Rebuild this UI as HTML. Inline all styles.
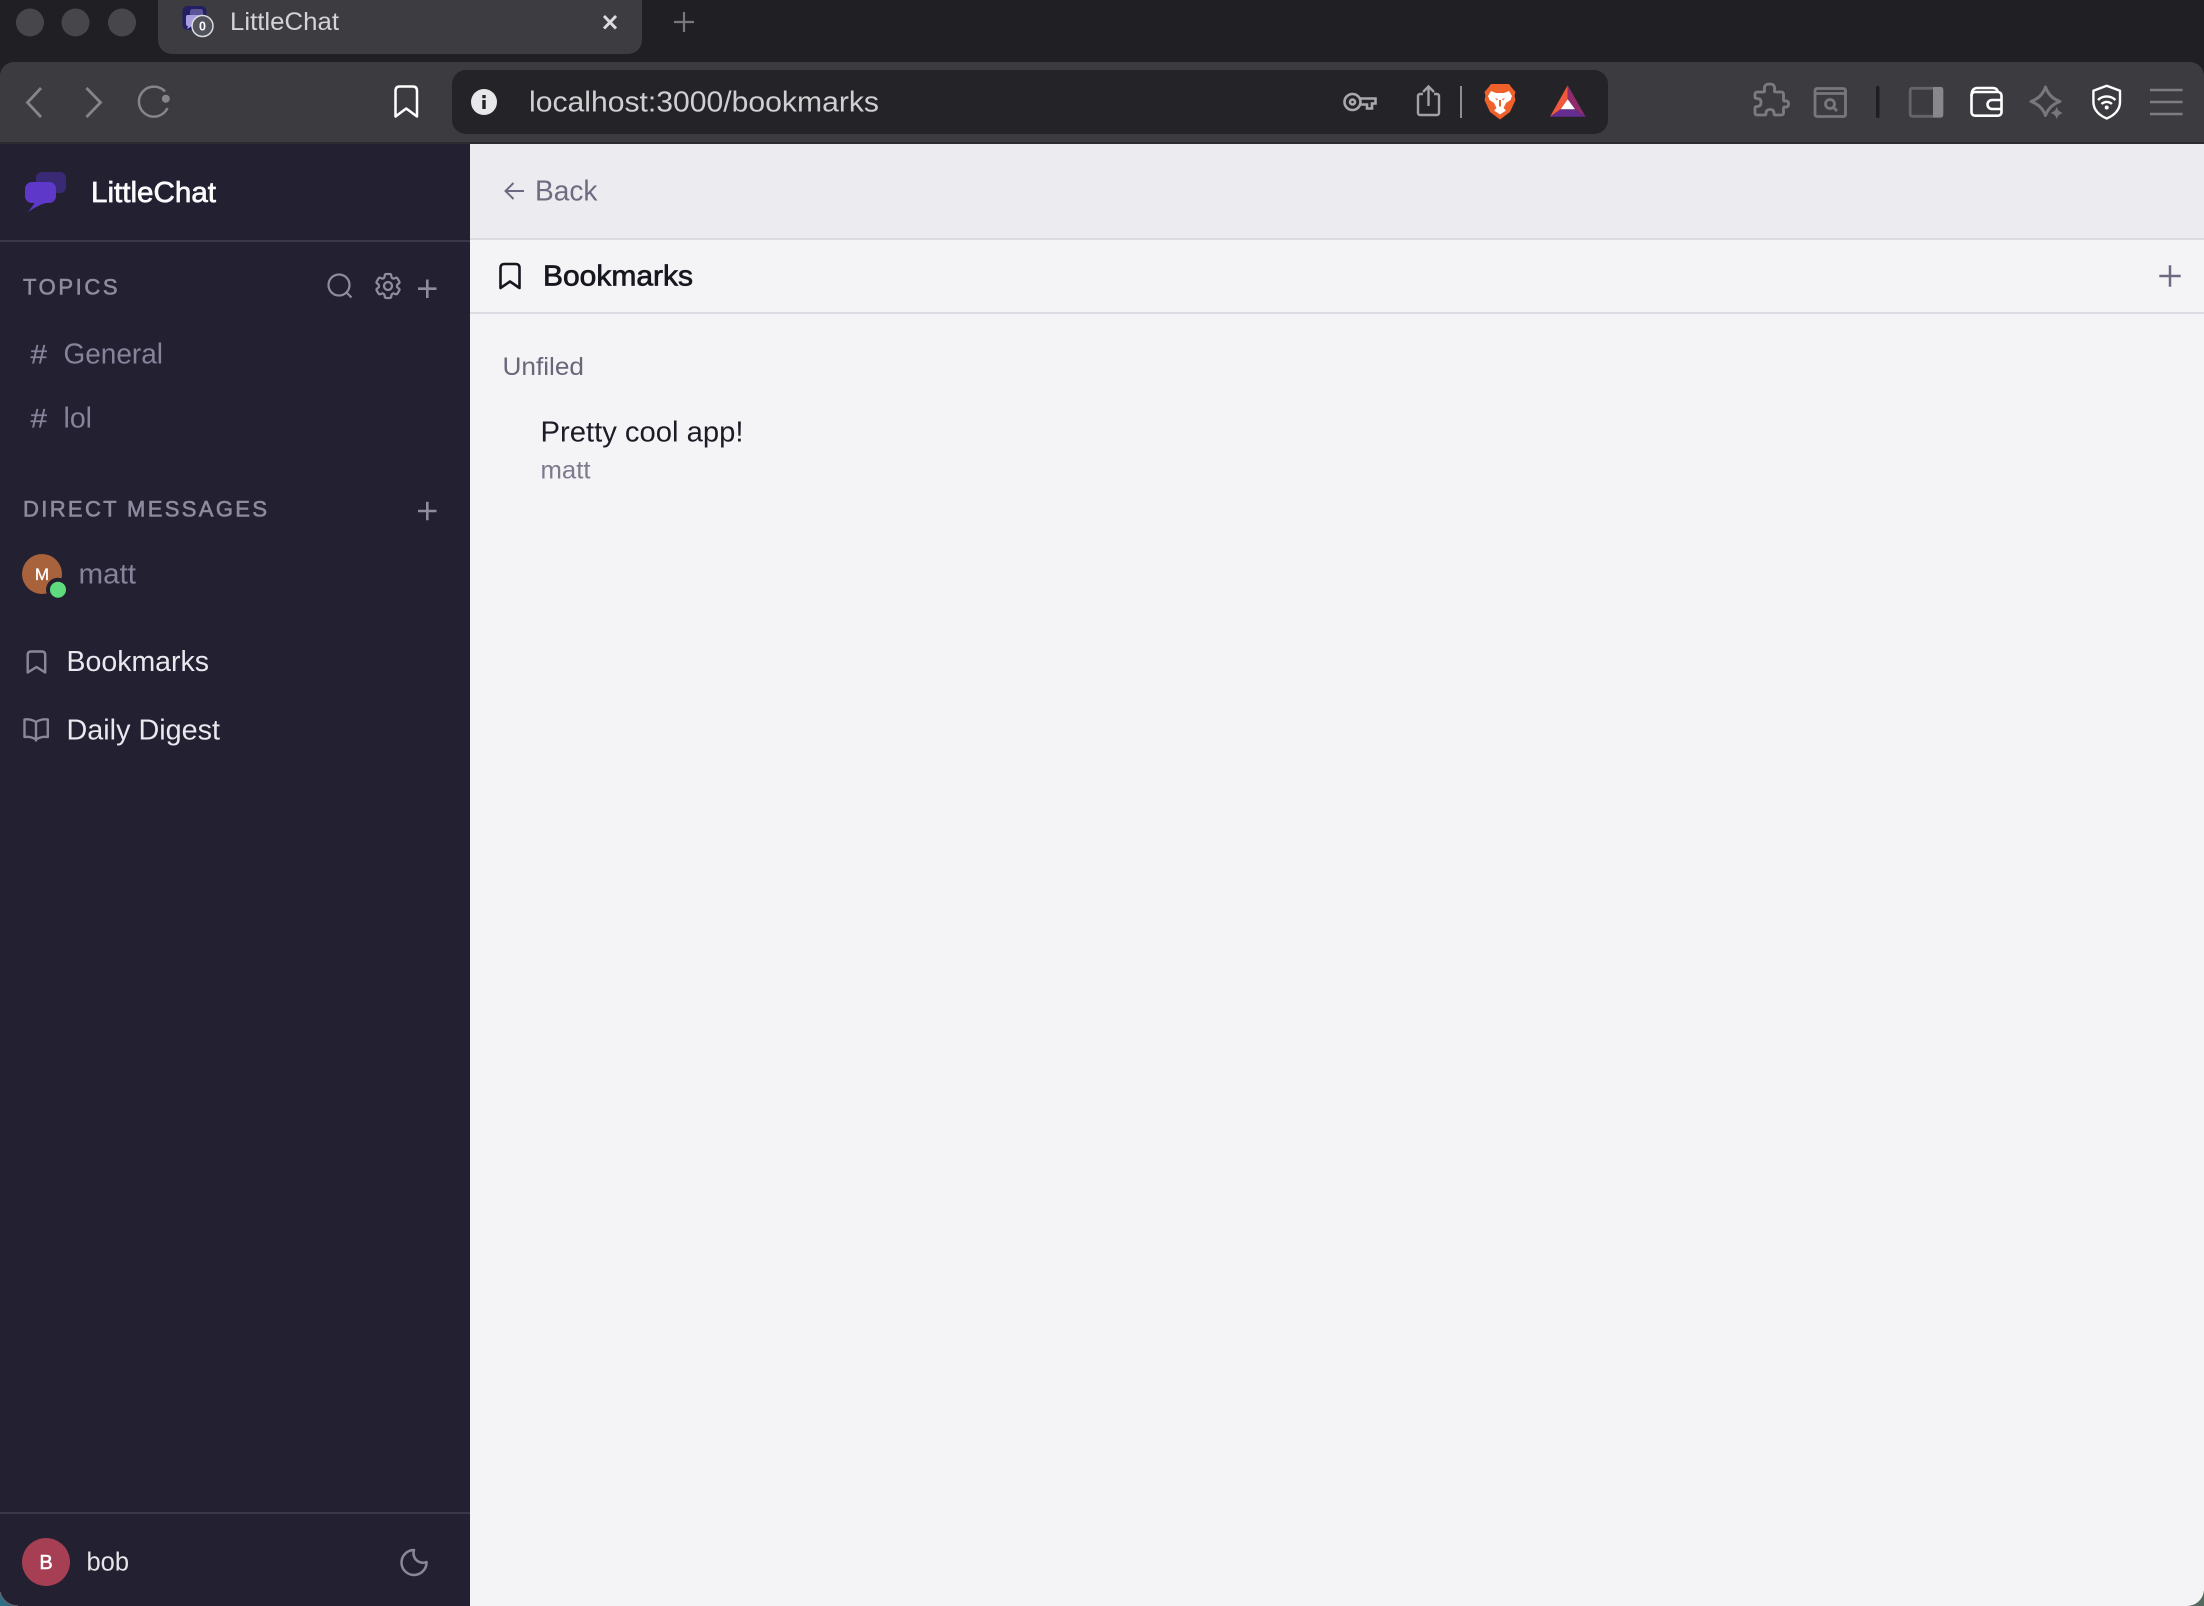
<!DOCTYPE html>
<html lang="en">
<head>
<meta charset="utf-8">
<title>LittleChat</title>
<style>
html,body{margin:0;padding:0;width:2204px;height:1606px;overflow:hidden;background:#202024}
svg{display:block;position:absolute;left:0;top:0}
text{font-family:"Liberation Sans",sans-serif}
</style>
</head>
<body>
<svg width="2204" height="1606" viewBox="0 0 2204 1606" xmlns="http://www.w3.org/2000/svg">
  <!-- window chrome -->
  <rect width="2204" height="1606" fill="#202024"/>
  <circle cx="30" cy="22.5" r="14" fill="#47474b"/>
  <circle cx="75.5" cy="22.5" r="14" fill="#47474b"/>
  <circle cx="122" cy="22.5" r="14" fill="#47474b"/>
  <path d="M158 0H642V40a14 14 0 0 1-14 14H172a14 14 0 0 1-14-14Z" fill="#3c3c41"/>
  <!-- favicon -->
  <rect x="182.5" y="6" width="24" height="24" rx="5" fill="#231f63"/>
  <rect x="190" y="9" width="13" height="10" rx="2.5" fill="#5c5699"/>
  <path d="M187 15h12a2 2 0 0 1 2 2v7a2 2 0 0 1-2 2h-7l-5 3 1-3a2 2 0 0 1-2-2v-7a2 2 0 0 1 1-2Z" fill="#a89fe0"/>
  <circle cx="202.5" cy="26" r="10.5" fill="#50525c" stroke="#dddddf" stroke-width="1.5"/>
  <text x="202.5" y="30.5" font-size="12.5" font-weight="700" fill="#fff" text-anchor="middle">0</text>
  <text x="230" y="30" font-size="25" fill="#d4d4d6" textLength="109" lengthAdjust="spacingAndGlyphs">LittleChat</text>
  <path d="M604 16l12 12.500M616 16l-12 12.500" stroke="#dcdcde" stroke-width="3" fill="none"/>
  <path d="M684 12v20M674 22h20" stroke="#77777c" stroke-width="2.200" fill="none"/>

  <!-- toolbar -->
  <path d="M0 144V76a14 14 0 0 1 14-14H2190a14 14 0 0 1 14 14V144Z" fill="#3c3b40"/>
  <rect y="142" width="2204" height="2" fill="#2c2c30"/>
  <path d="M41 88L27.5 102.500 41 117M86.500 88L100.500 102.500 86.500 117" stroke="#86868a" stroke-width="2.800" fill="none"/>
  <path d="M165 91.500A15 15 0 1 0 167.500 108" stroke="#86868a" stroke-width="2.500" fill="none"/>
  <circle cx="165.800" cy="98.700" r="4" fill="#86868a"/>
  <path d="M395.500 91q0-4.500 4-4.500h13.500q4 0 4 4.500V116.500l-10.800-8-10.700 8Z" stroke="#fff" stroke-width="2.500" fill="none" stroke-linejoin="round"/>
  <rect x="452" y="70" width="1156" height="64" rx="14" fill="#242428"/>
  <circle cx="484" cy="102" r="13" fill="#e8e8ea"/>
  <rect x="482.300" y="100" width="3.400" height="9" fill="#242428"/>
  <rect x="482.300" y="95" width="3.400" height="3.200" fill="#242428"/>
  <text x="529" y="111.500" font-size="29" fill="#d0d0d2" textLength="350" lengthAdjust="spacingAndGlyphs">localhost:3000/bookmarks</text>
  <!-- key -->
  <g stroke="#a9a9ad" stroke-width="2.600" fill="none">
    <circle cx="1352.500" cy="102" r="8"/>
    <circle cx="1352.500" cy="102" r="2.500"/>
    <path d="M1360.500 98.500H1375.500V103.500H1372V108.500H1367V104.500H1360.500"/>
  </g>
  <!-- share -->
  <g stroke="#a2a2a6" stroke-width="2.400" fill="none">
    <path d="M1423 94h-3a2 2 0 0 0-2 2v17a2 2 0 0 0 2 2h17a2 2 0 0 0 2-2V96a2 2 0 0 0-2-2h-3"/>
    <path d="M1428.500 106V87M1423 92l5.500-5.500 5.500 5.500"/>
  </g>
  <rect x="1460" y="86" width="2" height="32" fill="#8e8e92"/>
  <!-- lion shield -->
  <path d="M1491 84H1509L1512 88 1515.500 92 1514.500 96 1515.500 100 1510 112 1500 119.500 1490 112 1484.500 100 1485.500 96 1484.500 92 1488 88Z" fill="#f0602a"/>
  <path d="M1491 91L1496 93H1504L1509 91 1512 96 1510.500 100 1506 103 1503.500 108 1506 110.500 1500 114.500 1494 110.500 1496.500 108 1494 103 1489.500 100 1488 96Z" fill="#fff"/>
  <path d="M1495 98l3 1-1 1.500zM1505 98l-3 1 1 1.500zM1499 100V106.500h2V100Z" fill="#f0602a"/>
  <!-- BAT -->
  <path d="M1567.700 85.300L1550 116.700 1560.700 109.300 1567.700 99.300Z" fill="#f0593c"/>
  <path d="M1567.700 85.300L1585.700 116.700 1575 109.300 1567.700 99.300Z" fill="#8f2a6b"/>
  <path d="M1550 116.700H1585.700L1575 109.300H1560.700Z" fill="#662d91"/>
  <path d="M1567.700 99.300L1560.700 109.300H1575Z" fill="#fff"/>
  <!-- right toolbar icons -->
  <path d="M1757 92h6.500q1.500 0 1-2q-1-6 5-6q6 0 5 6q-.5 2 1 2h6a2 2 0 0 1 2 2v6q0 1.500 2 1q3-.5 3 3q0 3.500-3 3q-2-.5-2 1v5a2 2 0 0 1-2 2h-6q-1.500 0-1.500-1.500q0-4-4-4q-4 0-4 4q0 1.500-1.500 1.500h-7.500a2 2 0 0 1-2-2v-5q0-1.500 2-1.500q4 0 4-4q0-4-4-4q-2 0-2-1.500v-3a2 2 0 0 1 2-2Z" stroke="#7c7c80" stroke-width="2.800" fill="none"/>
  <g stroke="#78787c" fill="none" stroke-width="2.800">
    <rect x="1815" y="88.500" width="30.500" height="28" rx="2"/>
    <path d="M1815 93.500H1845.500"/>
    <circle cx="1830" cy="104" r="4.500"/>
    <path d="M1833.500 107.500l3.500 3.500"/>
  </g>
  <rect x="1876" y="86" width="3.500" height="32" rx="1.500" fill="#1e1e22"/>
  <rect x="1910.200" y="88.300" width="32" height="28" rx="2" stroke="#656569" stroke-width="2.800" fill="none"/>
  <path d="M1933 87H1941a2 2 0 0 1 2 2V115.500a2 2 0 0 1-2 2H1933Z" fill="#88888c"/>
  <g stroke="#fff" stroke-width="2.600" fill="none">
    <path d="M1971.500 96q0-8 6-8H1993q4 0 5 4"/>
    <rect x="1971.500" y="92" width="30" height="23.700" rx="3.500"/>
    <path d="M2002 100H1992a4.500 4.500 0 0 0 0 9H2002"/>
  </g>
  <path d="M2045.500 87Q2049 97.500 2060 101.500Q2049 105.500 2045.500 115.500Q2042 105.500 2031 101.500Q2042 97.500 2045.500 87Z" stroke="#78787c" stroke-width="3" fill="none" stroke-linejoin="round"/>
  <path d="M2056.800 106.500C2057.500 110 2059 111.700 2063 113C2059 114.300 2057.500 116 2056.800 119.500C2056 116 2054.500 114.300 2050.500 113C2054.500 111.700 2056 110 2056.800 106.500Z" fill="#78787c"/>
  <g stroke="#fff" fill="none" stroke-width="2.400">
    <path d="M2106.700 85.800L2120 90.800V102C2120 110 2114 115.500 2106.700 118.500C2099.400 115.500 2093.400 110 2093.400 102V90.800Z" stroke-linejoin="round"/>
    <path d="M2098 100a12.500 12.500 0 0 1 17.400 0M2101.500 104a7.500 7.500 0 0 1 10.400 0"/>
  </g>
  <circle cx="2106.700" cy="107.500" r="2" fill="#fff"/>
  <path d="M2150 90H2182.500M2150 102H2182.500M2150 114H2182.500" stroke="#7e7e82" stroke-width="2.500" fill="none"/>

  <!-- sidebar -->
  <rect x="0" y="144" width="470" height="1462" fill="#232031"/>
  <rect x="36" y="172" width="30" height="21" rx="6" fill="#3a2a75"/>
  <path d="M32 182H49a7 7 0 0 1 7 7V196a7 7 0 0 1-7 7H46C40 204.500 34 208 28 212C30 209 33 206 34.500 203H32a7 7 0 0 1-7-7V189a7 7 0 0 1 7-7Z" fill="#5e38c8"/>
  <text x="91" y="202" font-size="29" fill="#fbfbfd" stroke="#fbfbfd" stroke-width=".7" textLength="125" lengthAdjust="spacingAndGlyphs">LittleChat</text>
  <rect y="240" width="470" height="2" fill="#3a3748"/>

  <text x="23" y="294.300" font-size="22" fill="#8f8b9f" stroke="#8f8b9f" stroke-width=".6" textLength="94.500" lengthAdjust="spacing">TOPICS</text>
  <g stroke="#8f8c9e" fill="none" stroke-width="2.200">
    <circle cx="339" cy="285" r="10.500"/>
    <path d="M346.500 292.500L351.500 297.500"/>
  </g>
  <g transform="translate(372 270) scale(1.333)" stroke="#8f8c9e" fill="none" stroke-width="1.700">
    <path d="M9.594 3.94c.09-.542.56-.94 1.11-.94h2.593c.55 0 1.020.398 1.110.94l.213 1.281c.063.374.313.686.645.870.074.040.147.083.220.127.325.196.720.257 1.075.124l1.217-.456a1.125 1.125 0 0 1 1.370.490l1.296 2.247a1.125 1.125 0 0 1-.260 1.431l-1.003.827c-.293.241-.438.613-.430.992a7.723 7.723 0 0 1 0 .255c-.008.378.137.750.430.991l1.004.827c.424.350.534.955.260 1.430l-1.298 2.247a1.125 1.125 0 0 1-1.369.491l-1.217-.456c-.355-.133-.750-.072-1.076.124a6.470 6.470 0 0 1-.220.128c-.331.183-.581.495-.644.869l-.213 1.281c-.090.543-.560.940-1.110.940h-2.594c-.550 0-1.019-.398-1.110-.940l-.213-1.281c-.062-.374-.312-.686-.644-.870a6.520 6.520 0 0 1-.220-.127c-.325-.196-.720-.257-1.076-.124l-1.217.456a1.125 1.125 0 0 1-1.369-.490l-1.297-2.247a1.125 1.125 0 0 1 .260-1.431l1.004-.827c.292-.240.437-.613.430-.991a6.932 6.932 0 0 1 0-.255c.007-.380-.138-.751-.430-.992l-1.004-.827a1.125 1.125 0 0 1-.260-1.430l1.297-2.247a1.125 1.125 0 0 1 1.370-.491l1.216.456c.356.133.751.072 1.076-.124.072-.044.146-.086.220-.128.332-.183.582-.495.644-.869l.214-1.280Z"/>
    <circle cx="12" cy="12" r="3"/>
  </g>
  <path d="M427.300 279.500V298M418 288.700H436.500" stroke="#8f8c9e" stroke-width="2.600" fill="none"/>

  <text x="30.500" y="363.300" font-size="27" fill="#86839a" stroke="#86839a" stroke-width=".3" textLength="16.500" lengthAdjust="spacingAndGlyphs">#</text>
  <text x="63.500" y="363.300" font-size="28.500" fill="#86839a" textLength="99.500" lengthAdjust="spacingAndGlyphs">General</text>
  <text x="30.500" y="427.300" font-size="27" fill="#86839a" stroke="#86839a" stroke-width=".3" textLength="16.500" lengthAdjust="spacingAndGlyphs">#</text>
  <text x="63.500" y="427.300" font-size="28.500" fill="#86839a" textLength="28.500" lengthAdjust="spacingAndGlyphs">lol</text>

  <text x="23" y="516.700" font-size="22" fill="#8f8b9f" stroke="#8f8b9f" stroke-width=".6" textLength="244" lengthAdjust="spacing">DIRECT MESSAGES</text>
  <path d="M427.300 501.700V520.300M418 511H436.500" stroke="#8f8c9e" stroke-width="2.600" fill="none"/>

  <circle cx="42" cy="574" r="20" fill="#a8623c"/>
  <text x="42" y="580" font-size="17" fill="#fff" stroke="#fff" stroke-width=".3" text-anchor="middle">M</text>
  <circle cx="58" cy="589.700" r="12" fill="#232031"/>
  <circle cx="58" cy="589.700" r="8" fill="#5ddb7d"/>
  <text x="78.500" y="583.300" font-size="28.500" fill="#86839a" textLength="57.500" lengthAdjust="spacingAndGlyphs">matt</text>

  <path d="M27.700 655q0-3.500 3.500-3.500h10.500q3.500 0 3.500 3.500V672.500l-8.700-5.500-8.800 5.500Z" stroke="#8a879b" stroke-width="2.400" fill="none" stroke-linejoin="round"/>
  <text x="66.500" y="671" font-size="28.500" fill="#e9e8ee" textLength="142.500" lengthAdjust="spacingAndGlyphs">Bookmarks</text>
  <path d="M36 722C32 719.500 28 719 24.500 719.500V737C28 736.500 32 737 36 739.500C40 737 44 736.500 47.800 737V719.500C44 719 40 719.500 36 722ZM36 722V741.500" stroke="#8a879b" stroke-width="2.400" fill="none" stroke-linejoin="round"/>
  <text x="66.500" y="739.300" font-size="28.500" fill="#e9e8ee" textLength="153.500" lengthAdjust="spacingAndGlyphs">Daily Digest</text>

  <rect y="1512" width="470" height="2" fill="#3a3748"/>
  <circle cx="46" cy="1562" r="24" fill="#a63f53"/>
  <text x="46" y="1569" font-size="20" fill="#fff" stroke="#fff" stroke-width=".5" text-anchor="middle">B</text>
  <text x="86.500" y="1570.700" font-size="25.500" fill="#e6e5ea" textLength="42.500" lengthAdjust="spacingAndGlyphs">bob</text>
  <path d="M414 1550A12.500 12.500 0 1 0 426.500 1562A9.500 9.500 0 0 1 414 1550Z" stroke="#8a879b" stroke-width="2.500" fill="none" stroke-linejoin="round"/>

  <!-- main -->
  <rect x="470" y="144" width="1734" height="1462" fill="#f4f4f7"/>
  <rect x="470" y="144" width="1734" height="94" fill="#ecebf0"/>
  <rect x="470" y="238" width="1734" height="2" fill="#dcdbe2"/>
  <rect x="470" y="312" width="1734" height="2" fill="#dcdbe2"/>
  <path d="M524 191H506M513.500 183L505.500 191 513.500 199" stroke="#6c6a7e" stroke-width="2" fill="none"/>
  <text x="535" y="200.700" font-size="28.500" fill="#6e6c80" textLength="62.500" lengthAdjust="spacingAndGlyphs">Back</text>
  <path d="M500.500 268q0-4 4-4h11q4 0 4 4v20l-9.500-6.500-9.500 6.500Z" stroke="#17161f" stroke-width="2.600" fill="none" stroke-linejoin="round"/>
  <text x="543" y="285.700" font-size="28.500" fill="#17171f" stroke="#17171f" stroke-width=".7" textLength="150" lengthAdjust="spacingAndGlyphs">Bookmarks</text>
  <path d="M2170 265.300V286.700M2159.300 276H2180.700" stroke="#6c6a7e" stroke-width="2.500" fill="none"/>
  <text x="502.500" y="375" font-size="25" fill="#686679" textLength="81.500" lengthAdjust="spacingAndGlyphs">Unfiled</text>
  <text x="540.500" y="441.700" font-size="28.500" fill="#1c1b26" textLength="203" lengthAdjust="spacingAndGlyphs">Pretty cool app!</text>
  <text x="540.500" y="478.700" font-size="25" fill="#7c7a8c" textLength="50" lengthAdjust="spacingAndGlyphs">matt</text>

  <!-- window corners -->
  <path d="M0 1606V1592A18 18 0 0 0 18 1606Z" fill="#2f6f86"/>
  <path d="M0 1592A18 18 0 0 0 18 1606" stroke="#5a6270" stroke-width="1.500" fill="none"/>
  <path d="M2204 1606V1590A17 17 0 0 1 2187 1606Z" fill="#56695f"/>
</svg>
</body>
</html>
